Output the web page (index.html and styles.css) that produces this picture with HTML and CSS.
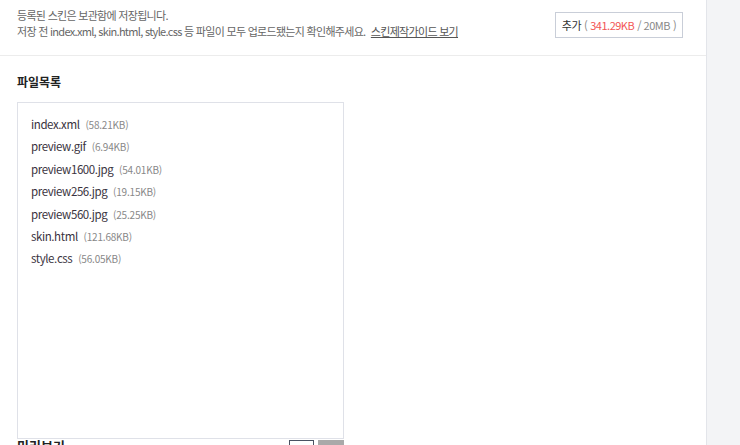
FILE: index.html
```html
<!DOCTYPE html>
<html lang="ko">
<head>
    <meta charset="UTF-8">
    <title>스킨 등록</title>
    <link rel="stylesheet" href="styles.css">
</head>
<body>

<div class="page">
    <div class="main">
        <!-- 안내 + 추가 버튼 -->
        <div class="header">
            <div class="notice">
                <p>등록된 스킨은 보관함에 저장됩니다.</p>
                <p>저장 전 index.xml, skin.html, style.css 등 파일이 모두 업로드됐는지 확인해주세요. <a href="#" class="guide">스킨제작가이드 보기</a></p>
            </div>
            <button class="btn-add">추가 <span class="paren">(</span> <span class="used">341.29KB</span> <span class="limit">/ 20MB</span> <span class="paren">)</span></button>
        </div>

        <!-- 파일목록 -->
        <div class="section">
            <h3>파일목록</h3>
            <ul class="file-list">
                <li>index.xml <span class="size">(58.21KB)</span></li>
                <li>preview.gif <span class="size">(6.94KB)</span></li>
                <li>preview1600.jpg <span class="size">(54.01KB)</span></li>
                <li>preview256.jpg <span class="size">(19.15KB)</span></li>
                <li>preview560.jpg <span class="size">(25.25KB)</span></li>
                <li>skin.html <span class="size">(121.68KB)</span></li>
                <li>style.css <span class="size">(56.05KB)</span></li>
            </ul>

            <div class="preview-head">
                <h3>미리보기</h3>
                <div class="preview-btns">
                    <span class="pbtn on"></span>
                    <span class="pbtn off"></span>
                </div>
            </div>
        </div>
    </div>
    <div class="side"></div>
</div>

</body>
</html>
```

FILE: styles.css
```css
* {
    margin: 0;
    padding: 0;
    box-sizing: border-box;
}

body {
    font-family: "Noto Sans CJK KR", "Noto Sans", sans-serif;
    font-size: 12px;
    color: #333;
    background-color: #fff;
    overflow: hidden;
}

.page {
    display: flex;
    height: 445px;
}

.main {
    width: 707px;
    border-right: 1px solid #e3e5ea;
}

.side {
    flex: 1;
    background-color: #f3f4f6;
}

.header {
    display: flex;
    justify-content: space-between;
    align-items: flex-start;
    height: 56px;
    padding: 7px 23px 0 17px;
    border-bottom: 1px solid #ececec;
}

.notice p {
    font-size: 11px;
    line-height: 16px;
    color: #666;
    letter-spacing: -0.7px;
}

.guide {
    margin-left: 3px;
    color: #555;
    text-decoration: underline;
}

.btn-add {
    display: flex;
    align-items: center;
    justify-content: center;
    gap: 3px;
    margin-top: 5px;
    width: 128px;
    height: 26px;
    font-family: inherit;
    font-size: 11px;
    color: #333;
    background-color: #fff;
    border: 1px solid #c9ced8;
    letter-spacing: -0.5px;
}

.btn-add .paren,
.btn-add .limit {
    color: #888;
}

.btn-add .used {
    color: #f25555;
}

.section {
    padding: 18px 17px 0;
}

h3 {
    font-size: 12px;
    font-weight: bold;
    color: #222;
    line-height: 16px;
}

.file-list {
    list-style: none;
    margin-top: 12px;
    width: 327px;
    height: 337px;
    padding: 10px 13px 0;
    border: 1px solid #dfe1e8;
}

.file-list li {
    height: 22.4px;
    line-height: 22px;
    font-size: 11.5px;
    color: #3a3340;
    letter-spacing: -0.4px;
}

.file-list .size {
    margin-left: 3px;
    font-size: 10px;
    line-height: 1;
    color: #888;
    letter-spacing: -0.2px;
}

.preview-head {
    display: flex;
    justify-content: space-between;
    width: 327px;
    margin-top: -1px;
}

.preview-head h3 {
    font-size: 13px;
}

.preview-btns {
    display: flex;
    gap: 4px;
    padding-top: 2px;
}

.pbtn {
    display: block;
    width: 26px;
    height: 20px;
}

.pbtn.on {
    width: 25px;
    border: 1px solid #4a5262;
}

.pbtn.off {
    background-color: #a9a9a9;
}
```
